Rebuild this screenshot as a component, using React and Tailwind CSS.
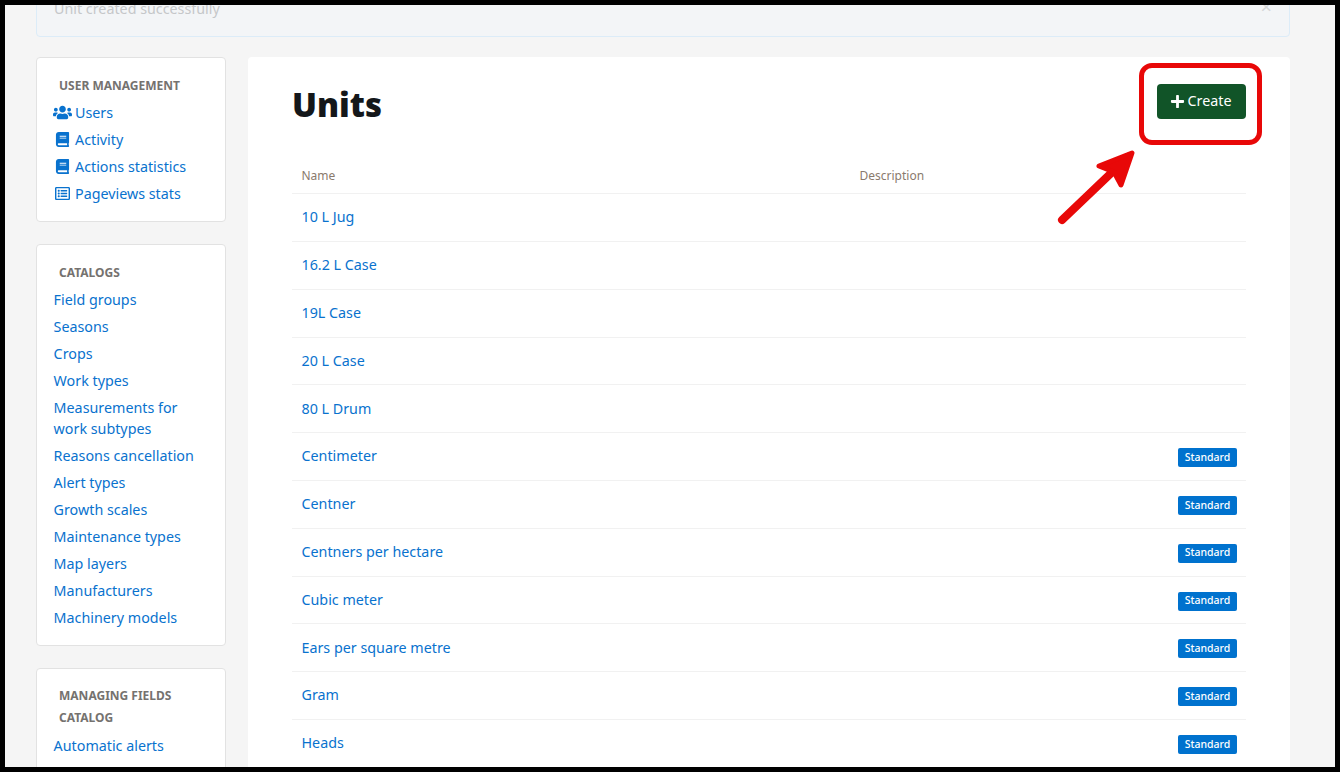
import { FaUsers, FaBook, FaPlus, FaRegListAlt } from 'react-icons/fa'

const userLinks = [
  { label: 'Users', icon: FaUsers, size: 'text-[19px]' },
  { label: 'Activity', icon: FaBook, size: 'text-[15px]' },
  { label: 'Actions statistics', icon: FaBook, size: 'text-[15px]' },
  { label: 'Pageviews stats', icon: FaRegListAlt, size: 'text-[15px]' },
]

const catalogs = [
  'Field groups',
  'Seasons',
  'Crops',
  'Work types',
  'Measurements for work subtypes',
  'Reasons cancellation',
  'Alert types',
  'Growth scales',
  'Maintenance types',
  'Map layers',
  'Manufacturers',
  'Machinery models',
]

const units = [
  { name: '10 L Jug' },
  { name: '16.2 L Case' },
  { name: '19L Case' },
  { name: '20 L Case' },
  { name: '80 L Drum' },
  { name: 'Centimeter', standard: true },
  { name: 'Centner', standard: true },
  { name: 'Centners per hectare', standard: true },
  { name: 'Cubic meter', standard: true },
  { name: 'Ears per square metre', standard: true },
  { name: 'Gram', standard: true },
  { name: 'Heads', standard: true },
]

function SideCard({ title, children, className }) {
  return (
    <div className={`rounded-[4px] border border-[#e2e2e2] bg-white pl-[16px] pr-[16px] ${className}`}>
      <h6 className="pl-[6px] text-[12px] font-bold uppercase leading-[22px] text-[#75726f]">{title}</h6>
      {children}
    </div>
  )
}

function SideLink({ children }) {
  return <a className="mt-[6px] block pl-[0.6px] text-[14.3px] leading-[21px] text-[#0972ce]">{children}</a>
}

export default function App() {
  return (
    <div className="relative h-[772px] overflow-hidden border-[5px] border-black bg-[#f5f5f5] font-['Noto_Sans',sans-serif]">
      <div className="px-[31px]">
        {/* Alert */}
        <div className="relative mt-[-20px] mr-[14px] h-[52px] w-[1254px] rounded-[4px] border border-[#dcecf8] bg-[#f3f5f7] pl-[17px] pt-[12px] text-[14.3px] leading-[21px] text-[#c5c7c9]">
          Unit created successfully
          <span className="absolute right-[17px] top-[11px] text-[20px] leading-[20px] text-[#d4d6d8]">×</span>
        </div>

        <div className="mt-[20px] flex gap-[22px]">
          {/* Sidebar */}
          <div className="flex w-[190px] shrink-0 flex-col gap-[22px]">
            <SideCard title="User management" className="h-[165px] pt-[17px]">
              <div className="mt-[-1px]">
                {userLinks.map(({ label, icon: Icon, size }) => (
                  <a key={label} className="mt-[6px] flex h-[21px] items-center text-[14.3px] leading-[21px] text-[#0972ce]">
                    <span className="ml-[-1px] flex w-[20px] shrink-0 justify-center">
                      <Icon className={size} />
                    </span>
                    <span className="ml-[3px]">{label}</span>
                  </a>
                ))}
              </div>
            </SideCard>
            <SideCard title="Catalogs" className="h-[402px] pt-[17px]">
              <div className="mt-[-1px]">
                {catalogs.map(c => (
                  <SideLink key={c}>{c}</SideLink>
                ))}
              </div>
            </SideCard>
            <SideCard title="Managing fields catalog" className="h-[200px] pt-[16px]">
              <SideLink>Automatic alerts</SideLink>
            </SideCard>
          </div>

          {/* Main */}
          <div className="h-[800px] w-[1042px] rounded-[4px] bg-white pl-[44px] pr-[44px] pt-[27px]">
            <div className="flex h-[53px] items-start justify-between">
              <h1 className="mt-[1px] text-[33px] font-black leading-[40px] text-[#14171a]">Units</h1>
              <button className="flex h-[35px] w-[89px] items-center justify-center rounded-[4px] bg-[#115428] pb-[2px] pr-[2px] text-[14.3px] text-white">
                <FaPlus className="mr-[3px] mt-[2px] text-[15px]" />
                Create
              </button>
            </div>

            <div className="mt-[25px] flex h-[32.2px] items-center border-b border-[#f1f1f1] pb-[4px] pl-[9.5px] pr-[9px] text-[12px] text-[#8a7a6d]">
              <span className="w-[558px]">Name</span>
              <span>Description</span>
            </div>
            {units.map(u => (
              <div key={u.name} className="flex h-[47.8px] items-center justify-between border-b border-[#f1f1f1] pl-[9.5px] pr-[9px] text-[14.3px] text-[#0972ce]">
                <a className="pb-[0.9px]">{u.name}</a>
                {u.standard && (
                  <span className="mt-[2.1px] flex h-[19px] w-[59px] items-center justify-center rounded-[2px] bg-[#0072ce] text-[10.5px] font-medium text-white">
                    Standard
                  </span>
                )}
              </div>
            ))}
          </div>
        </div>
      </div>

      {/* Annotation: red box and arrow */}
      <div className="absolute left-[1134px] top-[58px] h-[82px] w-[123px] rounded-[13px] border-[5px] border-[#e80808]" />
      <svg className="absolute left-[1045px] top-[140px]" width="100" height="90" viewBox="0 0 100 90" fill="none">
        <path d="M12 75 L 78 12" stroke="#e80808" strokeWidth="8" strokeLinecap="round" />
        <path d="M49 21 L 82 8 L 71 40 L 64 27 Z" stroke="#e80808" strokeWidth="5" strokeLinecap="round" strokeLinejoin="round" fill="#e80808" />
      </svg>
    </div>
  )
}
